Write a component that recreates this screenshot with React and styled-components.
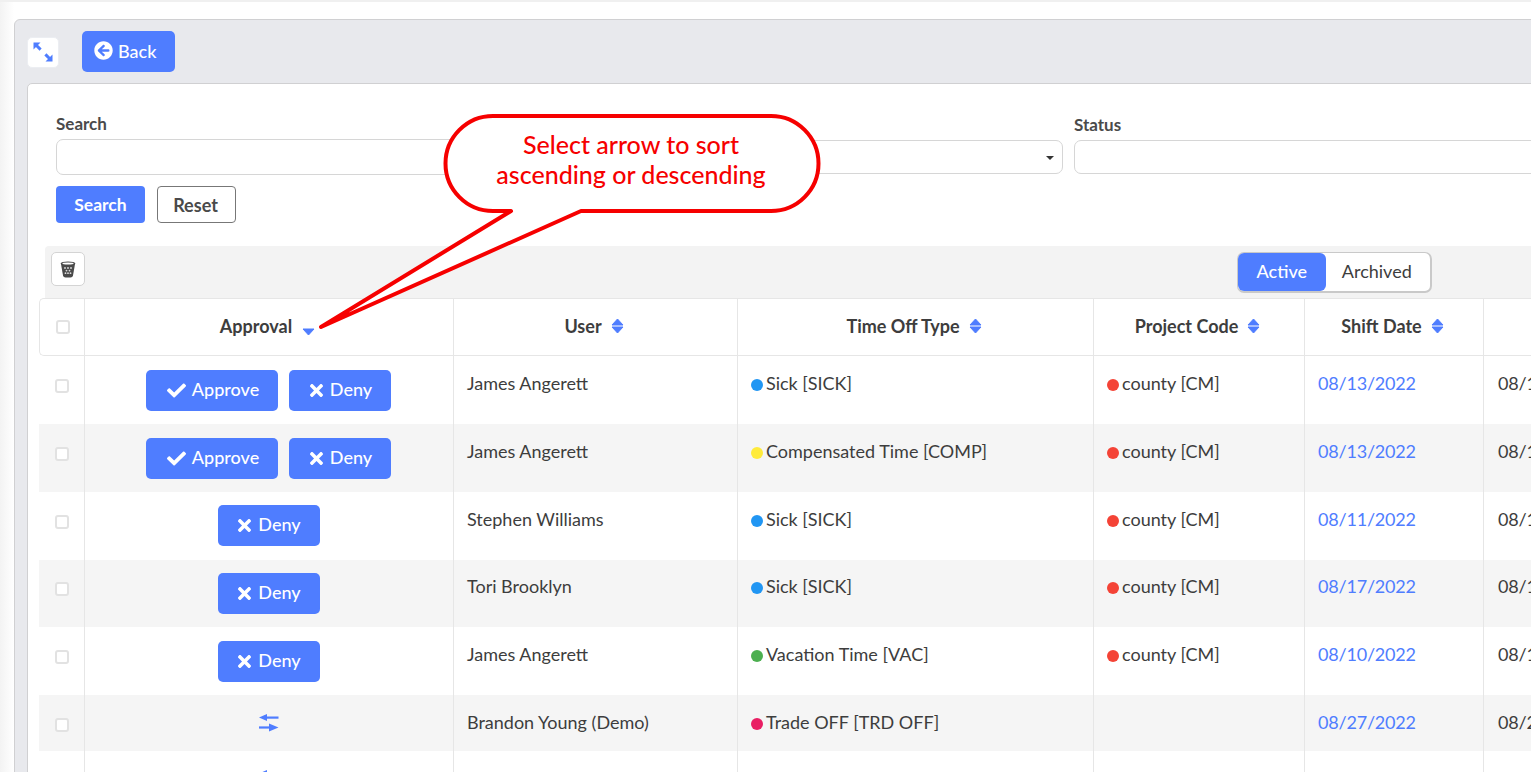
import React from "react";
import styled, { createGlobalStyle } from "styled-components";
import { FaArrowCircleLeft, FaCheck, FaTimes } from "react-icons/fa";

const BLUE = "#4f7dff";
const LINE = "#e6e6e6";

const Global = createGlobalStyle`
  html, body { margin: 0; padding: 0; background: #fff; }
  body { font-family: Lato, "Open Sans", sans-serif; color: #3d3d3d; overflow: hidden; }
  * { box-sizing: border-box; }
`;

const Page = styled.div`
  position: relative;
  width: 1531px;
  height: 772px;
  overflow: hidden;
  padding: 19px 0 0 14px;
  border-top: 2px solid #f0f0f0;
  background: linear-gradient(90deg, #f3f3f3 0, #fff 14px);
`;

const Panel = styled.div`
  width: 1700px;
  height: 800px;
  margin-top: -2px;
  padding: 11px 0 0 12px;
  background: #e8e9ed;
  border: 1px solid #d0d0d2;
  border-radius: 6px 0 0 0;
`;

const TopBar = styled.div`
  display: flex;
  align-items: center;
  gap: 23px;
  height: 41px;
  margin-bottom: 11px;
`;

const ExpandButton = styled.button`
  width: 32px;
  height: 31px;
  margin-top: 1px;
  padding: 0;
  display: flex;
  align-items: center;
  justify-content: center;
  background: #fff;
  border: 1px solid #eceef2;
  border-radius: 5px;
`;

const BackButton = styled.button`
  height: 41px;
  width: 93px;
  display: flex;
  align-items: center;
  gap: 5px;
  padding: 0 0 2px 12px;
  background: ${BLUE};
  color: #fff;
  border: 0;
  border-radius: 5px;
  font: 500 18px Lato, sans-serif;
`;

const Card = styled.div`
  width: 1660px;
  height: 760px;
  padding-top: 30px;
  background: #fff;
  border: 1px solid #d0d0d2;
  border-radius: 5px 0 0 0;
`;

const Filters = styled.div`
  padding-left: 28px;
`;

const FilterGrid = styled.div`
  display: grid;
  grid-template-columns: repeat(3, 497.5px);
  column-gap: 11.5px;
`;

const Field = styled.div`
  padding-top: ${(p) => (p.$compact ? "1px" : "0")};
`;

const Label = styled.div`
  height: 19px;
  margin-bottom: 6px;
  font-size: 17px;
  line-height: 19px;
  font-weight: 700;
  color: #4a4a4a;
`;

const Input = styled.div`
  position: relative;
  height: ${(p) => (p.$compact ? "34px" : "36px")};
  border: 1px solid #d6d6d6;
  border-radius: 7px;
  background: #fff;
`;

const Caret = styled.span`
  position: absolute;
  right: 8px;
  top: 15px;
  width: 0;
  height: 0;
  border-left: 4px solid transparent;
  border-right: 4px solid transparent;
  border-top: 4px solid #333;
`;

const FilterActions = styled.div`
  display: flex;
  gap: 12px;
  margin-top: 11px;
`;

const SearchButton = styled.button`
  width: 89px;
  height: 37px;
  padding: 0;
  background: ${BLUE};
  color: #fff;
  border: 0;
  border-radius: 4px;
  font: 700 17.5px Lato, sans-serif;
`;

const ResetButton = styled.button`
  width: 79px;
  height: 37px;
  padding: 0 2px 0 0;
  background: #fff;
  color: #4a4a4a;
  border: 1px solid #777;
  border-radius: 4px;
  font: 700 18px Lato, sans-serif;
`;

const Toolbar = styled.div`
  display: flex;
  justify-content: space-between;
  align-items: flex-start;
  width: 1600px;
  height: 52px;
  margin: 23px 0 0 17px;
  padding: 6px 0 0 6px;
  background: #f3f3f3;
  border-radius: 4px 0 0 0;
`;

const TrashButton = styled.button`
  width: 34px;
  height: 34px;
  padding: 0;
  display: flex;
  align-items: center;
  justify-content: center;
  background: #fff;
  border: 1px solid #d4d4d4;
  border-radius: 5px;
`;

const Segment = styled.div`
  display: flex;
  width: 195px;
  height: 41px;
  margin-right: 213px;
  border: 1px solid #c9c9c9;
  border-right-width: 2px;
  border-bottom-width: 2px;
  border-radius: 7px;
  background: #fff;
`;

const SegmentItem = styled.div`
  width: ${(p) => (p.$active ? "88px" : "105px")};
  padding-right: ${(p) => (p.$active ? "0" : "2px")};
  text-align: center;
  font-size: 18px;
  line-height: 37px;
  color: ${(p) => (p.$active ? "#fff" : "#3d3d3d")};
  background: ${(p) => (p.$active ? BLUE : "transparent")};
  border-radius: 6px;
  font-weight: ${(p) => (p.$active ? 500 : 400)};
`;

const Table = styled.table`
  width: 1661px;
  margin-left: 11px;
  table-layout: fixed;
  border-collapse: separate;
  border-spacing: 0;
  font-size: 18px;
`;

const HeadCell = styled.th`
  height: 58px;
  padding: 0 0 2px;
  text-align: center;
  vertical-align: middle;
  font-size: 18px;
  font-weight: 700;
  color: #3d3d3d;
  background: #fff;
  border-top: 1px solid ${LINE};
  border-bottom: 1px solid ${LINE};
  border-left: 1px solid ${LINE};
  &:first-child { border-radius: 5px 0 0 5px; }
`;

const HeadInner = styled.span`
  display: inline-flex;
  align-items: center;
  gap: ${(p) => (p.$wide ? "10px" : "9px")};
  padding-right: ${(p) => (p.$wide ? "3px" : "3px")};
`;

const Row = styled.tr`
  height: ${(p) => p.$h}px;
  background: ${(p) => (p.$alt ? "#f5f5f5" : "#fff")};
`;

const Cell = styled.td`
  padding: ${(p) => p.$top}px 13px 0;
  vertical-align: top;
  line-height: 20px;
  color: #3d3d3d;
  white-space: nowrap;
  border-left: 1px solid ${LINE};
`;

const ActionCell = styled(Cell)`
  padding-left: 0;
  padding-right: 1px;
  text-align: center;
`;

const CheckCell = styled.td`
  padding: ${(p) => p.$top}px 0 0 16px;
  vertical-align: top;
`;

const CheckHead = styled(HeadCell)`
  padding: 0 0 0 16px;
  text-align: left;
`;

const Box = styled.span`
  display: block;
  width: 14px;
  height: 14px;
  background: #fff;
  border: 2px solid #e2e2e2;
  border-radius: 3px;
`;

const ActionButton = styled.button`
  height: 41px;
  width: ${(p) => (p.$approve ? "132px" : "102px")};
  margin: 0 ${(p) => (p.$approve ? "11px" : "0")} 0 0;
  padding: ${(p) => (p.$approve ? "0 0 3px 2px" : "0 0 3px")};
  display: inline-flex;
  align-items: center;
  justify-content: center;
  gap: ${(p) => (p.$approve ? "6px" : "5px")};
  background: ${BLUE};
  color: #fff;
  border: 0;
  border-radius: 5px;
  font: 500 18px Lato, sans-serif;
  vertical-align: top;
`;

const CheckGlyph = styled(FaCheck)`
  font-size: 19px;
  margin-top: 2px;
`;

const TimesGlyph = styled(FaTimes)`
  font-size: 19px;
  margin: 2px -1px 0 -1px;
`;

const Dot = styled.span`
  display: inline-block;
  width: 12px;
  height: 12px;
  margin: 0 3px 0 0;
  border-radius: 50%;
  vertical-align: -1px;
  background: ${(p) => p.$c};
`;

const DateLink = styled.span`
  color: ${BLUE};
  letter-spacing: -0.2px;
`;

const PlainDate = styled.span`
  padding-left: 1px;
  letter-spacing: -0.2px;
`;

const SwapSvg = styled.svg`
  display: block;
  margin: 0 auto;
`;

const Callout = styled.svg`
  position: absolute;
  left: 0;
  top: -2px;
  pointer-events: none;
`;

const CalloutText = styled.div`
  position: absolute;
  left: 445px;
  top: 127px;
  width: 372px;
  text-align: center;
  color: #f60000;
  font: 500 25px/30px Lato, sans-serif;
  white-space: nowrap;
`;

const ExpandIcon = () => (
  <svg width="20" height="20" viewBox="0 0 20 20" fill={BLUE}>
    <path d="M0.5 0.5 H7.5 L0.5 7.5 Z" />
    <path d="M3 3 L7.6 7.6" stroke={BLUE} strokeWidth="3" />
    <path d="M19.5 19.5 H12.5 L19.5 12.5 Z" />
    <path d="M17 17 L12.4 12.4" stroke={BLUE} strokeWidth="3" />
  </svg>
);

const SortIcon = () => (
  <svg width="13" height="16" viewBox="0 0 13 16">
    <path d="M1 7 L6.5 1 L12 7 Z" fill={BLUE} stroke={BLUE} strokeLinejoin="round" />
    <path d="M1 9 L12 9 L6.5 15 Z" fill={BLUE} stroke={BLUE} strokeLinejoin="round" />
  </svg>
);

const SortDownIcon = () => (
  <svg width="13" height="16" viewBox="0 0 13 16" style={{ marginTop: 9 }}>
    <path d="M1 6 L12 6 L6.5 12 Z" fill={BLUE} stroke={BLUE} strokeLinejoin="round" />
  </svg>
);

const SwapIcon = () => (
  <SwapSvg width="20" height="18" viewBox="0 0 20 18" fill={BLUE}>
    <path d="M0 3.5 L8 0 V7 Z" />
    <rect x="7" y="2.5" width="12.5" height="2.2" />
    <path d="M19.5 13.5 L10 9.5 V17.5 Z" />
    <rect x="0" y="12.4" width="11" height="2.2" />
  </SwapSvg>
);

const TrashIcon = () => (
  <svg width="16" height="17" viewBox="0 0 16 17">
    <path d="M1 3 L3 14.5 Q3.4 16.5 5.5 16.5 H10.5 Q12.6 16.5 13 14.5 L15 3 Z" fill="#4a4a4a" />
    <ellipse cx="8" cy="2.6" rx="7.4" ry="2.1" fill="#4a4a4a" />
    <ellipse cx="8" cy="2.6" rx="5.6" ry="1" fill="#fff" />
    <g fill="#dcdcdc">
      <circle cx="5" cy="7" r="0.9" /><circle cx="8" cy="7" r="0.9" /><circle cx="11" cy="7" r="0.9" />
      <circle cx="6.5" cy="9.6" r="0.9" /><circle cx="9.5" cy="9.6" r="0.9" />
      <circle cx="5.5" cy="12.2" r="0.9" /><circle cx="8" cy="12.2" r="0.9" /><circle cx="10.5" cy="12.2" r="0.9" />
    </g>
  </svg>
);

const DOT = { sick: "#2196f3", comp: "#ffeb3b", vac: "#4caf50", trade: "#e91e63", county: "#f44336" };

const rows = [
  { h: 68, text: 17, top: 14, box: 23, actions: "both", user: "James Angerett", type: "Sick [SICK]", dot: DOT.sick, code: true, shift: "08/13/2022", next: "08/13/2022" },
  { h: 68, text: 17, top: 14, box: 23, actions: "both", user: "James Angerett", type: "Compensated Time [COMP]", dot: DOT.comp, code: true, shift: "08/13/2022", next: "08/13/2022" },
  { h: 68, text: 17, top: 13, box: 23, actions: "deny", user: "Stephen Williams", type: "Sick [SICK]", dot: DOT.sick, code: true, shift: "08/11/2022", next: "08/11/2022" },
  { h: 67, text: 16, top: 13, box: 22, actions: "deny", user: "Tori Brooklyn", type: "Sick [SICK]", dot: DOT.sick, code: true, shift: "08/17/2022", next: "08/17/2022" },
  { h: 68, text: 17, top: 14, box: 23, actions: "deny", user: "James Angerett", type: "Vacation Time [VAC]", dot: DOT.vac, code: true, shift: "08/10/2022", next: "08/10/2022" },
  { h: 56, text: 17, top: 19, box: 23, actions: "swap", user: "Brandon Young (Demo)", type: "Trade OFF [TRD OFF]", dot: DOT.trade, code: false, shift: "08/27/2022", next: "08/27/2022" },
  { h: 56, text: 18, top: 19, box: 23, actions: "swap", user: "Brandon Young (Demo)", type: "Trade OFF [TRD OFF]", dot: DOT.trade, code: false, shift: "08/27/2022", next: "08/27/2022" },
];

const headers = ["User", "Time Off Type", "Project Code", "Shift Date"];

export default function App() {
  return (
    <Page>
      <Global />
      <Panel>
        <TopBar>
          <ExpandButton><ExpandIcon /></ExpandButton>
          <BackButton><FaArrowCircleLeft size={19} />Back</BackButton>
        </TopBar>
        <Card>
          <Filters>
            <FilterGrid>
              <Field>
                <Label>Search</Label>
                <Input />
              </Field>
              <Field $compact>
                <Label />
                <Input $compact><Caret /></Input>
              </Field>
              <Field $compact>
                <Label>Status</Label>
                <Input $compact />
              </Field>
            </FilterGrid>
            <FilterActions>
              <SearchButton>Search</SearchButton>
              <ResetButton>Reset</ResetButton>
            </FilterActions>
          </Filters>
          <Toolbar>
            <TrashButton><TrashIcon /></TrashButton>
            <Segment>
              <SegmentItem $active>Active</SegmentItem>
              <SegmentItem>Archived</SegmentItem>
            </Segment>
          </Toolbar>
          <Table>
            <colgroup>
              <col style={{ width: 45 }} />
              <col style={{ width: 369 }} />
              <col style={{ width: 284 }} />
              <col style={{ width: 356 }} />
              <col style={{ width: 211 }} />
              <col style={{ width: 179 }} />
              <col style={{ width: 217 }} />
            </colgroup>
            <thead>
              <tr>
                <CheckHead><Box /></CheckHead>
                <HeadCell><HeadInner $wide>Approval<SortDownIcon /></HeadInner></HeadCell>
                {headers.map((h) => (
                  <HeadCell key={h}><HeadInner>{h}<SortIcon /></HeadInner></HeadCell>
                ))}
                <HeadCell />
              </tr>
            </thead>
            <tbody>
              {rows.map((r, i) => (
                <Row key={i} $h={r.h} $alt={i % 2 === 1}>
                  <CheckCell $top={r.box}><Box /></CheckCell>
                  <ActionCell $top={r.top}>
                    {r.actions === "both" && (
                      <ActionButton $approve><CheckGlyph />Approve</ActionButton>
                    )}
                    {(r.actions === "both" || r.actions === "deny") && (
                      <ActionButton><TimesGlyph />Deny</ActionButton>
                    )}
                    {r.actions === "swap" && <SwapIcon />}
                  </ActionCell>
                  <Cell $top={r.text}>{r.user}</Cell>
                  <Cell $top={r.text}><Dot $c={r.dot} />{r.type}</Cell>
                  <Cell $top={r.text}>{r.code && (<><Dot $c={DOT.county} />county [CM]</>)}</Cell>
                  <Cell $top={r.text}><DateLink>{r.shift}</DateLink></Cell>
                  <Cell $top={r.text}><PlainDate>{r.next}</PlainDate></Cell>
                </Row>
              ))}
            </tbody>
          </Table>
        </Card>
      </Panel>
      <Callout width="1531" height="772" viewBox="0 0 1531 772">
        <path
          d="M511 211 H493 A47.5 47.5 0 0 1 493 116 H771 A47.5 47.5 0 0 1 771 211 H581 L321 327 Z"
          fill="#fff"
          stroke="#f60000"
          strokeWidth="4"
          strokeLinejoin="round"
        />
      </Callout>
      <CalloutText>Select arrow to sort<br />ascending or descending</CalloutText>
    </Page>
  );
}
